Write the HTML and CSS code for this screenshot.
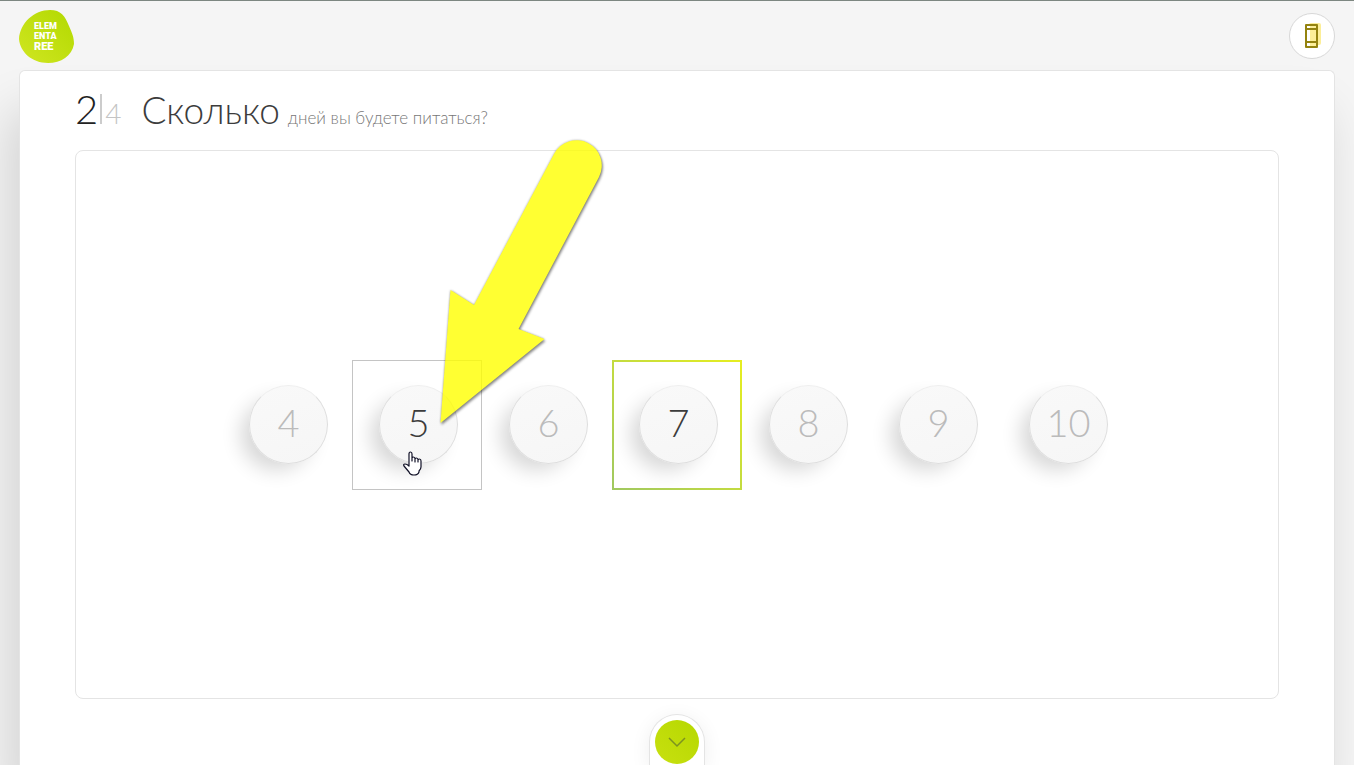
FILE: index.html
```html
<!DOCTYPE html>
<html lang="ru">
<head>
    <meta charset="UTF-8">
    <meta name="viewport" content="width=device-width, initial-scale=1.0">
    <title>Elementaree</title>
    <link rel="stylesheet" href="styles.css">
</head>
<body>
    <header class="header">
        <a class="logo" href="#" aria-label="Elementaree">
            <svg width="56" height="54" viewBox="0 0 56 54">
                <defs>
                    <linearGradient id="lime" x1="0" y1="1" x2="1" y2="0">
                        <stop offset="0" stop-color="#d0e622"/>
                        <stop offset="1" stop-color="#b2d900"/>
                    </linearGradient>
                </defs>
                <path d="M31 1C42 1 46 7 50 17C53 24 55 28 55 35C53 47 42 54 29 54C13 54 1 43 0 30C1 14 15 1 31 1Z" fill="url(#lime)"/>
                <g class="logo-text">
                    <text x="15" y="20" font-size="9">ELEM</text>
                    <text x="15" y="30" font-size="9">ENTA</text>
                    <text x="15" y="41" font-size="11">REE</text>
                </g>
            </svg>
        </a>
        <button class="box-button" type="button" aria-label="Меню">
            <svg width="20" height="28" viewBox="0 0 20 28">
                <rect x="7" y="1" width="12" height="22" rx="2" fill="#fcee98"/>
                <path d="M4 3h11v22H4z" fill="#fff"/>
                <path d="M8 3h7v22H8z" fill="#fcee98"/>
                <path d="M4 3h11v22h-11zM4 7h11M4 20h11" fill="none" stroke="#94830f" stroke-width="2" stroke-linejoin="round"/>
            </svg>
        </button>
    </header>

    <main class="card">
        <div class="title">
            <div class="step">
                <span class="step-current">2</span>
                <span class="step-total">4</span>
            </div>
            <h1>Сколько</h1>
            <p>дней вы будете питаться?</p>
        </div>

        <form class="days">
            <label class="day"><input type="radio" name="days" value="4"><span>4</span></label>
            <label class="day day-hover">
                <input type="radio" name="days" value="5"><span>5</span>
                <svg class="hand" width="20" height="26" viewBox="0 0 20 26">
                    <path d="M6 14V3Q6 1 7.500 1T9 3V10V7Q9 6 10.500 6T12 8V11V8Q12 7 13.500 7T15 9V11V9Q15 8 16.500 8T18 10V16Q18 18 16 20V21Q15 24 11 24T6 21L1 15Q0 13 2 13Q4 13 6 15Z" fill="#fff" stroke="#101026" stroke-width="1.200" stroke-linejoin="round"/>
                </svg>
                <svg class="arrow" width="190" height="300" viewBox="0 0 190 300">
                    <path d="M10.500 293L20.500 160L44 175L124 24A25 25 0 0 1 169 47L88.500 199L114.500 209Z" fill="#ff0"/>
                </svg>
            </label>
            <label class="day"><input type="radio" name="days" value="6"><span>6</span></label>
            <label class="day"><input type="radio" name="days" value="7" checked><span>7</span></label>
            <label class="day"><input type="radio" name="days" value="8"><span>8</span></label>
            <label class="day"><input type="radio" name="days" value="9"><span>9</span></label>
            <label class="day"><input type="radio" name="days" value="10"><span>10</span></label>
        </form>

        <div class="next">
            <button class="next-button" type="button" aria-label="Далее">
                <svg width="18" height="12" viewBox="0 0 18 12">
                    <path d="M1 2l8 8 8-8" fill="none" stroke="#7c9320" stroke-width="1.500"/>
                </svg>
            </button>
        </div>
    </main>
</body>
</html>
```

FILE: styles.css
```css
* {
    box-sizing: border-box;
}
body {
    display: flex;
    flex-direction: column;
    height: 100vh;
    margin: 0;
    overflow: hidden;
    background-color: #f5f5f5;
    border-top: 1px solid #7d8781;
    font-family: Lato, "Noto Sans", sans-serif;
    font-weight: 300;
    color: #3c3c3c;
}
button {
    padding: 0;
    cursor: pointer;
}
.header {
    display: flex;
    justify-content: space-between;
    align-items: center;
    padding: 8px 19px 7px;
}
.logo svg {
    display: block;
}
.logo-text {
    fill: #fff;
    font-family: Roboto, sans-serif;
    font-weight: 900;
}
.box-button {
    display: flex;
    justify-content: center;
    align-items: center;
    width: 46px;
    height: 46px;
    background-color: #fff;
    border: 1px solid #d8d8d8;
    border-radius: 50%;
}
.card {
    display: flex;
    flex-direction: column;
    flex: 1;
    margin: 0 19px;
    padding: 0 55px;
    background-color: #fff;
    border: 1px solid #e4e4e4;
    border-bottom: none;
    border-radius: 6px 6px 0 0;
    box-shadow: -10px 40px 50px rgba(0, 0, 0, 0.14);
}
.title {
    display: flex;
    align-items: baseline;
    height: 79px;
    padding-top: 15px;
}
.step {
    display: flex;
    align-items: baseline;
    margin-right: 20px;
}
.step-current {
    padding-right: 2px;
    border-right: 2px solid #ccc;
    font-size: 40px;
    line-height: 30px;
    color: #222;
}
.step-total {
    padding-left: 3px;
    font-size: 28px;
    color: #c4c4c4;
}
h1 {
    margin: 0 8px 0 0;
    font-size: 37px;
    line-height: 48px;
    font-weight: 300;
}
.title p {
    margin: 0;
    font-size: 17px;
    color: #777;
}
.days {
    display: flex;
    flex: 1;
    justify-content: center;
    align-items: center;
    border: 1px solid #e4e4e4;
    border-radius: 8px;
}
.day {
    position: relative;
    display: flex;
    justify-content: center;
    align-items: center;
    width: 130px;
    height: 130px;
    border: 2px solid transparent;
    cursor: pointer;
}
.day input {
    position: absolute;
    opacity: 0;
}
.day span {
    display: flex;
    justify-content: center;
    align-items: center;
    width: 79px;
    height: 79px;
    margin-left: 3px;
    padding-bottom: 6px;
    background: linear-gradient(160deg, #f9f9f9, #f6f6f6);
    border: 1px solid #dedede;
    border-top-color: #efefef;
    border-radius: 50%;
    box-shadow: -12px 10px 20px -4px rgba(0, 0, 0, 0.16);
    font-size: 38px;
    color: #bbb;
}
.day:has(input:checked) {
    border-image: linear-gradient(to top right, #a0c860, #e6ee20) 1;
}
.day input:checked + span,
.day-hover span {
    color: #3c3c3c;
}
.day-hover {
    z-index: 1;
    padding: 1px;
    border: 1px solid #c4c4c4;
}
/* hand pointer and arrow lie over the hovered day */
.hand {
    position: absolute;
    left: 50px;
    top: 90px;
}
.arrow {
    position: absolute;
    left: 77px;
    top: -231px;
    pointer-events: none;
    opacity: 0.8;
    filter: drop-shadow(0 0 1px rgba(0, 0, 0, 0.4)) drop-shadow(1px 2px 1px rgba(0, 0, 0, 0.5));
}
.next {
    display: flex;
    justify-content: center;
    align-self: center;
    width: 56px;
    height: 51px;
    margin-top: 15px;
    padding-top: 5px;
    border: 1px solid #e4e4e4;
    border-bottom: none;
    border-radius: 28px 28px 0 0;
    box-shadow: 0 4px 20px rgba(0, 0, 0, 0.07);
}
.next-button {
    display: flex;
    justify-content: center;
    align-items: center;
    width: 44px;
    height: 44px;
    background: linear-gradient(to top right, #c8e010, #b6d800);
    border: none;
    border-radius: 50%;
}
```
